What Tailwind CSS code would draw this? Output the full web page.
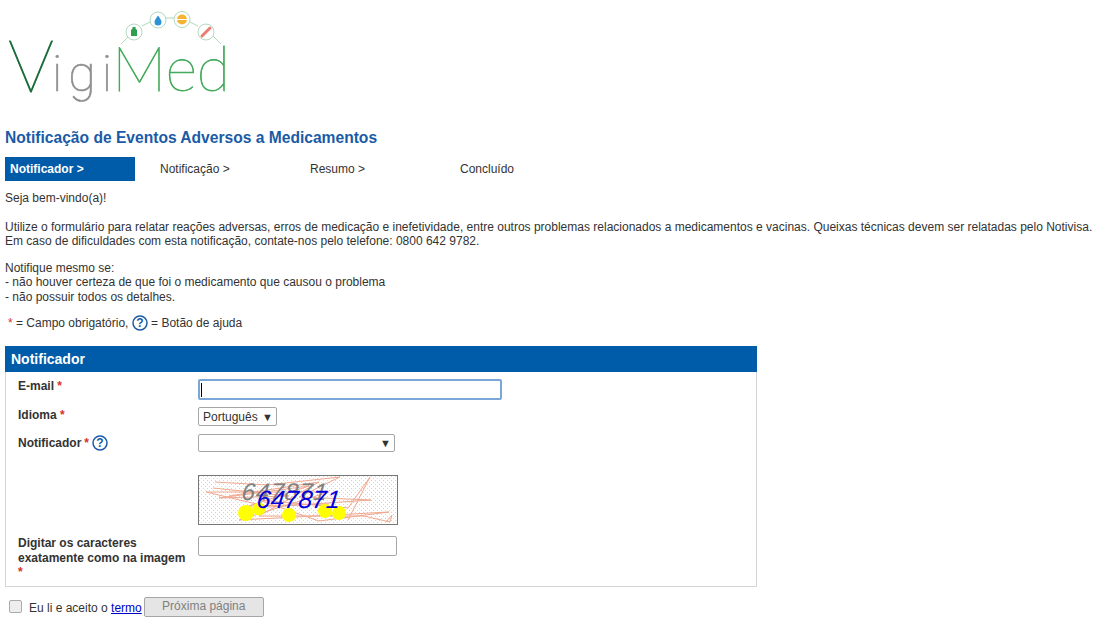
<!DOCTYPE html>
<html lang="pt">
<head>
  <meta charset="UTF-8" />
  <title>VigiMed - Notificação</title>
  <script src="https://cdn.jsdelivr.net/npm/@tailwindcss/browser@4"></script>
</head>
<body class="bg-white font-['Liberation_Sans',Arial,sans-serif] text-[12px] leading-[14.5px] text-[#333]">
  <div class="h-[641px] overflow-hidden px-[5px]">

    <!-- logo -->
    <svg class="block h-[129px] w-[240px]" viewBox="0 0 240 129">
      <g fill="none" stroke="#8fc9a0" stroke-width="0.7">
        <path d="M116 44 L124 36 M137 26 L145 22 M161 18 L169 18 M185 22 L193 26 M208 36 L216 44" />
        <circle cx="129" cy="32" r="8" fill="#fff" />
        <circle cx="153" cy="20" r="8" fill="#fff" />
        <circle cx="177" cy="19.500" r="8" fill="#fff" />
        <circle cx="201" cy="32" r="8" fill="#fff" />
      </g>
      <path d="M126 36 v-6 l1.500-1.500 v-1.500 h3 v1.500 l1.500 1.500 v6 z" fill="#2e9e4f" />
      <path d="M153 15.500 c2 3 3.500 4.500 3.500 6.500 a3.500 3.500 0 0 1-7 0 c0-2 1.500-3.500 3.500-6.500 z" fill="#2c93d6" />
      <circle cx="177" cy="19.500" r="5" fill="#f5b335" />
      <path d="M172 19.500 h10" stroke="#fff" stroke-width="1" />
      <path d="M197 36 L205 28" stroke="#ea7c72" stroke-width="3" stroke-linecap="round" />
      <text x="3" y="92" font-family="Lato" font-weight="100" font-size="72" fill="#1b6e3c" stroke="#1b6e3c" stroke-width="1">V</text>
      <text x="47" y="91" font-family="Roboto" font-weight="100" font-size="50" textLength="60" lengthAdjust="spacing" fill="#8f8f8f" stroke="#8f8f8f" stroke-width="0.6">igi</text>
      <text x="107" y="91" font-family="Lato" font-weight="100" font-size="61" textLength="118" lengthAdjust="spacingAndGlyphs" fill="#45ab5c" stroke="#45ab5c" stroke-width="0.8">Med</text>
    </svg>

    <h1 class="text-[15.6px] leading-[18px] font-bold text-[#1a5ba6]">Notificação de Eventos Adversos a Medicamentos</h1>

    <!-- steps -->
    <div class="mt-[10px] flex h-[24px] items-center">
      <div class="mr-[20px] flex h-full w-[130px] items-center bg-[#005ca9] pl-[5px] font-bold text-white">Notificador &gt;</div>
      <div class="w-[150px] pl-[5px]">Notificação &gt;</div>
      <div class="w-[150px] pl-[5px]">Resumo &gt;</div>
      <div class="w-[150px] pl-[5px]">Concluído</div>
    </div>

    <p class="mt-[10px]">Seja bem-vindo(a)!</p>
    <p class="mt-[14px]">Utilize o formulário para relatar reações adversas, erros de medicação e inefetividade, entre outros problemas relacionados a medicamentos e vacinas. Queixas técnicas devem ser relatadas pelo Notivisa.<br />Em caso de dificuldades com esta notificação, contate-nos pelo telefone: 0800 642 9782.</p>
    <p class="mt-[12px]">Notifique mesmo se:<br />- não houver certeza de que foi o medicamento que causou o problema<br />- não possuir todos os detalhes.</p>

    <p class="mt-[11px] flex h-[16px] items-center pl-[3px]">
      <span class="text-[#d9302c]">*</span>&nbsp;= Campo obrigatório,&nbsp;
      <svg class="h-[16px] w-[16px]" viewBox="0 0 16 16"><circle cx="8" cy="8" r="7" fill="#fff" stroke="#1a5ba6" stroke-width="1.500" /><text x="8" y="12" text-anchor="middle" font-family="Liberation Sans" font-weight="700" font-size="12" fill="#1a5ba6">?</text></svg>
      &nbsp;= Botão de ajuda
    </p>

    <!-- panel -->
    <div class="mt-[15px] w-[752px]">
      <div class="flex h-[26px] items-center bg-[#005ca9] pl-[6px] text-[14px] font-bold text-white">Notificador</div>
      <div class="h-[215px] border border-t-0 border-[#d5d5d5] pt-[7px]">
        <div class="flex h-[28px]">
          <label class="w-[192px] pl-[12px] font-bold">E-mail <span class="text-[#d9302c]">*</span></label>
          <div class="h-[21px] w-[304px] rounded-[2px] border-2 border-[#7ba6d8] bg-white pl-[1px] pt-[2px]"><div class="h-[14px] w-px bg-black"></div></div>
        </div>
        <div class="flex h-[27px]">
          <label class="w-[192px] pl-[12px] pt-[1px] font-bold">Idioma <span class="text-[#d9302c]">*</span></label>
          <div class="flex h-[19px] w-[79px] items-center justify-between rounded-[2px] border border-[#a6a6a6] pl-[4px] pr-[3px] pt-[1px]"><span>Português</span><span class="text-[11px]">▼</span></div>
        </div>
        <div class="flex h-[41px]">
          <label class="mt-[1px] flex h-[16px] w-[192px] items-center pl-[12px] font-bold">Notificador <span class="ml-[3px] text-[#d9302c]">*</span>
            <svg class="ml-[3px] h-[16px] w-[16px]" viewBox="0 0 16 16"><circle cx="8" cy="8" r="7" fill="#fff" stroke="#1a5ba6" stroke-width="1.500" /><text x="8" y="12" text-anchor="middle" font-family="Liberation Sans" font-weight="700" font-size="12" fill="#1a5ba6">?</text></svg>
          </label>
          <div class="flex h-[18px] w-[197px] items-center justify-end rounded-[2px] border border-[#a6a6a6] pr-[3px]"><span class="text-[11px]">▼</span></div>
        </div>
        <div class="flex h-[61px]">
          <div class="w-[192px]"></div>
          <svg class="h-[50px] w-[200px] border border-[#777]" viewBox="0 0 198 48">
            <defs>
              <pattern id="dots" width="4" height="4" patternUnits="userSpaceOnUse"><rect width="1" height="1" fill="#d4d4d4" /><rect x="2" y="2" width="1" height="1" fill="#d4d4d4" /></pattern>
            </defs>
            <rect width="198" height="48" fill="url(#dots)" />
            <g fill="none" stroke="#f0a88f" stroke-width="1">
              <path d="M16 6 L68 9 L141 1 L100 21 L172 24 L70 31 L7 16 L130 16 L40 44 L190 36 L120 45 L60 24 L149 32 L171 1 L149 44" />
              <path d="M30 20 L120 6 L60 40 L165 40 L191 46 L193 39 L187 46" />
              <path d="M14 12 L90 20 L20 22 L110 10 L50 30 L130 28" />
            </g>
            <g fill="#ffff00">
              <circle cx="47" cy="37" r="8" /><circle cx="60" cy="33" r="6.500" /><circle cx="90" cy="39" r="7" /><circle cx="126" cy="35" r="7" /><circle cx="140" cy="37" r="7" />
            </g>
            <text x="42" y="24" transform="skewX(-6)" transform-origin="42 24" font-family="Liberation Sans" font-style="italic" font-size="24" letter-spacing="1" fill="#808080">647871</text>
            <text x="57" y="32" transform="skewX(-6)" transform-origin="57 32" font-family="Liberation Sans" font-style="italic" font-size="25" fill="#0000dd">647871</text>
          </svg>
        </div>
        <div class="flex">
          <label class="w-[192px] pl-[12px] font-bold">Digitar os caracteres exatamente como na imagem <span class="block text-[#d9302c]">*</span></label>
          <div class="h-[20px] w-[199px] rounded-[2px] border border-[#a6a6a6]"></div>
        </div>
      </div>
    </div>

    <!-- footer -->
    <div class="mt-[9px] flex h-[21px] items-center pl-[4px]">
      <input type="checkbox" class="h-[13px] w-[13px] appearance-none rounded-[2px] border border-[#aaa] bg-[#eee]" />
      <span class="ml-[7px] pt-[3px]">Eu li e aceito o <a href="#" class="text-[#0000c8] underline">termo</a></span>
      <button class="ml-[2px] h-[20px] w-[120px] rounded-[2px] border border-[#a6a6a6] bg-[#e5e5e5] text-[#808080]">Próxima página</button>
    </div>
  </div>
</body>
</html>
